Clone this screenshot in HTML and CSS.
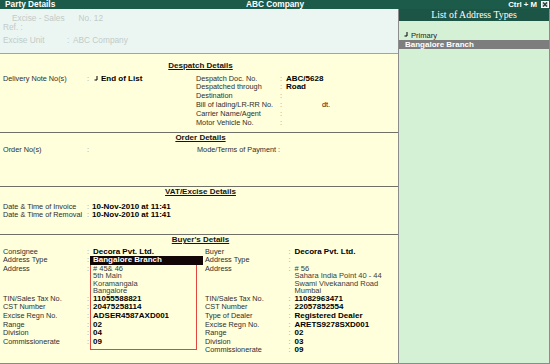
FILE: index.html
```html
<!DOCTYPE html>
<html>
<head>
<meta charset="utf-8">
<link rel="stylesheet" href="styles.css">
</head>
<body>
<div class="app">
  <div class="titlebar">
    <span class="tb-left">Party Details</span>
    <span class="tb-center">ABC Company</span>
    <span class="tb-right">Ctrl + M
      <svg class="close" viewBox="0 0 8 7" width="8" height="7"><rect x="0.5" y="0.5" width="7" height="6" fill="#d8dcda" stroke="#ffffff"/><path d="M2 1.5L6 5.5M6 1.5L2 5.5" stroke="#1c3a30" stroke-width="1.2"/></svg>
    </span>
  </div>
  <div class="body">
    <div class="main">
      <div class="top">
        <div class="top-row r1"><span class="t-voucher">Excise - Sales</span><span class="t-no">No. 12</span></div>
        <div class="top-row">Ref. :</div>
        <div class="top-row r3"><span class="t-lbl">Excise Unit</span><span class="t-col">:</span><span>ABC Company</span></div>
      </div>

      <section class="sec despatch">
        <h2 class="sec-title">Despatch Details</h2>
        <div class="split">
          <div class="half">
            <div class="row"><span class="lbl w-l">Delivery Note No(s)</span><span class="colon c-dn">:</span><span class="v"><svg class="ret" viewBox="0 0 4 5" width="4" height="5"><path d="M3 0V4H0.5" fill="none" stroke="#000" stroke-width="1"/></svg>End of List</span></div>
          </div>
          <div class="half">
            <div class="row"><span class="lbl w-d">Despatch Doc. No.</span><span class="colon c6">:</span><span class="v">ABC/5628</span></div>
            <div class="row"><span class="lbl w-d">Despatched through</span><span class="colon c6">:</span><span class="v">Road</span></div>
            <div class="row"><span class="lbl w-d">Destination</span><span class="colon c6">:</span><span class="v"></span></div>
            <div class="row"><span class="lbl w-d">Bill of lading/LR-RR No.</span><span class="colon c6">:</span><span class="dt">dt.</span></div>
            <div class="row"><span class="lbl w-d">Carrier Name/Agent</span><span class="colon c6">:</span><span class="v"></span></div>
            <div class="row"><span class="lbl w-d">Motor Vehicle No.</span><span class="colon c6">:</span><span class="v"></span></div>
          </div>
        </div>
      </section>

      <section class="sec order">
        <h2 class="sec-title">Order Details</h2>
        <div class="split">
          <div class="half">
            <div class="row"><span class="lbl w-l">Order No(s)</span><span class="colon c5">:</span></div>
          </div>
          <div class="half">
            <div class="row mode"><span class="lbl">Mode/Terms of Payment</span><span class="colon">:</span></div>
          </div>
        </div>
      </section>

      <section class="sec vat">
        <h2 class="sec-title">VAT/Excise Details</h2>
        <div class="row"><span class="lbl w-l">Date &amp; Time of Invoice</span><span class="colon c5">:</span><span class="v">10-Nov-2010 at 11:41</span></div>
        <div class="row"><span class="lbl w-l">Date &amp; Time of Removal</span><span class="colon c5">:</span><span class="v">10-Nov-2010 at 11:41</span></div>
      </section>

      <section class="sec buyer">
        <h2 class="sec-title">Buyer's Details</h2>
        <div class="bsplit">
          <div class="bleft">
            <div class="blabels">
              <div class="brow"><span class="lbl w-l">Consignee</span><span class="colon">:</span></div>
              <div class="brow"><span class="lbl w-l">Address Type</span><span class="colon">:</span></div>
              <div class="brow baddr"><span class="lbl w-l">Address</span><span class="colon">:</span></div>
              <div class="brow"><span class="lbl w-l">TIN/Sales Tax No.</span><span class="colon">:</span></div>
              <div class="brow"><span class="lbl w-l">CST Number</span><span class="colon">:</span></div>
              <div class="brow"><span class="lbl w-l">Excise Regn No.</span><span class="colon">:</span></div>
              <div class="brow"><span class="lbl w-l">Range</span><span class="colon">:</span></div>
              <div class="brow"><span class="lbl w-l">Division</span><span class="colon">:</span></div>
              <div class="brow"><span class="lbl w-l">Commissionerate</span><span class="colon">:</span></div>
            </div>
            <div class="bvals">
              <div class="brow v pad">Decora Pvt. Ltd.</div>
              <div class="redbox">
                <div class="brow hl">Bangalore Branch</div>
                <div class="addr">
                  <div>#&nbsp;45&amp; 46</div>
                  <div>5th Main</div>
                  <div>Koramangala</div>
                  <div>Bangalore</div>
                </div>
                <div class="brow v">11055588821</div>
                <div class="brow v">20475258114</div>
                <div class="brow v">ADSER4587AXD001</div>
                <div class="brow v">02</div>
                <div class="brow v">04</div>
                <div class="brow v">09</div>
              </div>
            </div>
          </div>
          <div class="bright">
            <div class="brow"><span class="lbl w-b">Buyer</span><span class="colon c6">:</span><span class="v">Decora Pvt. Ltd.</span></div>
            <div class="brow"><span class="lbl w-b">Address Type</span><span class="colon c6">:</span></div>
            <div class="brow baddr"><span class="lbl w-b">Address</span><span class="colon c6">:</span>
              <div class="addr">
                <div>#&nbsp;56</div>
                <div>Sahara India Point 40 - 44</div>
                <div>Swami Vivekanand Road</div>
                <div>Mumbai</div>
              </div>
            </div>
            <div class="brow"><span class="lbl w-b">TIN/Sales Tax No.</span><span class="colon c6">:</span><span class="v">11082963471</span></div>
            <div class="brow"><span class="lbl w-b">CST Number</span><span class="colon c6">:</span><span class="v">22057852554</span></div>
            <div class="brow"><span class="lbl w-b">Type of Dealer</span><span class="colon c6">:</span><span class="v">Registered Dealer</span></div>
            <div class="brow"><span class="lbl w-b">Excise Regn No.</span><span class="colon c6">:</span><span class="v">ARETS9278SXD001</span></div>
            <div class="brow"><span class="lbl w-b">Range</span><span class="colon c6">:</span><span class="v">02</span></div>
            <div class="brow"><span class="lbl w-b">Division</span><span class="colon c6">:</span><span class="v">03</span></div>
            <div class="brow"><span class="lbl w-b">Commissionerate</span><span class="colon c6">:</span><span class="v">09</span></div>
          </div>
        </div>
      </section>
    </div>

    <aside class="side">
      <div class="side-head">List of Address Types</div>
      <div class="side-body">
        <div class="side-row"><svg class="ret" viewBox="0 0 4 5" width="4" height="5"><path d="M3 0V4H0.5" fill="none" stroke="#000" stroke-width="1"/></svg>Primary</div>
        <div class="side-row sel">Bangalore Branch</div>
      </div>
    </aside>
  </div>
</div>
</body>
</html>
```

FILE: styles.css
```css
* { box-sizing: border-box; margin: 0; padding: 0; }

body {
  margin: 0;
  width: 550px;
  height: 364px;
  overflow: hidden;
  font-family: "Liberation Sans", Arial, sans-serif;
  font-size: 7.3px;
  color: #2e2e2e;
  background: #ffffdb;
}

.app { width: 550px; height: 364px; display: flex; flex-direction: column; }

/* title bar */
.titlebar {
  height: 9px;
  background: #1c5a4a;
  color: #fff;
  font-weight: bold;
  font-size: 8.3px;
  line-height: 9px;
  display: grid;
  grid-template-columns: 1fr auto 1fr;
  white-space: nowrap;
}
.tb-left { padding-left: 5px; }
.tb-center { text-align: center; }
.tb-right { justify-self: end; display: flex; align-items: center; gap: 4px; padding-right: 1px; font-size: 7.8px; }
.close { display: block; }

.body { flex: 1; display: flex; min-height: 0; }

/* main area */
.main {
  width: 398px;
  display: flex;
  flex-direction: column;
  border-bottom: 1px solid #8a8a8a;
}

.top {
  height: 45px;
  background: #ebf6f3;
  border-bottom: 1px solid #a3a3a3;
  color: #c2cbc7;
  font-size: 8.3px;
  padding-top: 4.5px;
}
.top-row { height: 9px; line-height: 9px; display: flex; padding-left: 3px; white-space: nowrap; }
.t-voucher { padding-left: 9px; }
.t-no { margin-left: 14px; }
.r3 { margin-top: 4px; }
.t-lbl { width: 64px; }
.t-col { width: 6px; }

.sec { border-bottom: 1px solid #707068; flex: none; }
.sec-title {
  font-size: 8px;
  font-weight: bold;
  text-decoration: underline;
  text-align: center;
  line-height: 10px;
  color: #141414;
  padding-left: 3px;
}

.split { display: grid; grid-template-columns: 196px 1fr; }

.row { display: flex; height: 8.8px; line-height: 8.8px; white-space: nowrap; }
.lbl { flex: none; white-space: nowrap; }
.w-l { width: 87px; padding-left: 3px; }
.w-d { width: 84px; }
.w-b { width: 83.5px; }
.colon { flex: none; color: #8c8c8c; }
.c5 { width: 5px; }
.c6 { width: 6px; }
.c-dn { width: 7px; }
.v { font-weight: bold; font-size: 8px; color: #000; white-space: nowrap; }
.dt { padding-left: 36px; color: #111; }
.ret { display: inline-block; vertical-align: top; margin-top: 1px; margin-right: 3px; }

.despatch { height: 79px; padding-top: 7px; }
.despatch .sec-title { margin-bottom: 3.6px; }

.order { height: 54px; }
.order .sec-title { margin-bottom: 3.3px; }
.mode { padding-left: 1px; }
.mode .colon { margin-left: 2px; color: #555; }

.vat { height: 48px; }
.vat .sec-title { margin-bottom: 5.6px; }

.buyer { flex: 1; border-bottom: none; }
.buyer .sec-title { margin-bottom: 2.7px; }

.bsplit { display: flex; }
.bleft { width: 205px; display: flex; flex: none; }
.blabels { width: 90px; flex: none; }
.bvals { width: 107px; flex: none; }
.brow { display: flex; height: 8.6px; line-height: 8.6px; white-space: nowrap; }
.brow.baddr { height: 30px; line-height: 7.5px; }
.pad { padding-left: 3px; }

.redbox {
  box-shadow: inset 0 0 0 1px #e0483f;
  padding-left: 3px;
  padding-bottom: 4px;
}
.hl {
  background: #120606;
  color: #fff;
  font-weight: bold;
  font-size: 8px;
  margin-left: -3px;
  padding-left: 3px;
  margin-right: -6px;
}
.addr { line-height: 7.5px; font-size: 7.5px; color: #3a3a3a; }
.bleft .addr { height: 30px; }

.bright { flex: 1; }

/* side panel */
.side {
  width: 152px;
  background: #d4f1d6;
  border-left: 1px solid #8c8c8c;
  border-right: 1px solid #8c8c8c;
  border-bottom: 1px solid #8c8c8c;
}
.side-head {
  height: 12px;
  line-height: 12px;
  background: #1c5446;
  color: #fff;
  font-family: "Liberation Serif", "Times New Roman", serif;
  font-size: 9.8px;
  text-align: center;
}
.side-body { padding-top: 9.5px; }
.side-row { height: 9px; line-height: 9px; padding-left: 5px; font-size: 7.6px; color: #222; white-space: nowrap; }
.side-row.sel { background: #7d7d7d; color: #fff; font-weight: bold; font-size: 8px; padding-left: 6px; }
```
